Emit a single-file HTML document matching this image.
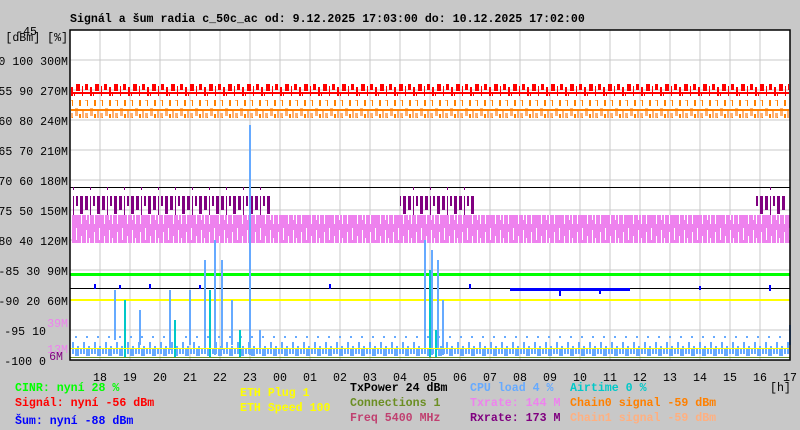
<!DOCTYPE html>
<html><head><meta charset="utf-8"><style>
html,body{margin:0;padding:0;background:#c8c8c8;}
svg{display:block;}
text{font-family:"Liberation Mono","DejaVu Sans Mono",monospace;font-size:11.6px;}
</style></head><body>
<svg width="800" height="430" viewBox="0 0 800 430" xmlns="http://www.w3.org/2000/svg">
<defs>
<pattern id="pk" width="23" height="28" patternUnits="userSpaceOnUse">
<rect width="23" height="28" fill="#ee82ee"/><rect x="2" y="8" width="1" height="20" fill="#fff"/><rect x="7" y="4" width="1" height="12" fill="#fff"/><rect x="12" y="12" width="1" height="16" fill="#fff"/><rect x="17" y="6" width="1" height="18" fill="#fff"/><rect x="20" y="14" width="1" height="14" fill="#fff"/>
</pattern>
<pattern id="pu" width="17" height="28" patternUnits="userSpaceOnUse">
<rect x="0" y="0" width="3" height="14" fill="#800080"/><rect x="5" y="0" width="1" height="22" fill="#800080"/><rect x="8" y="0" width="2" height="10" fill="#800080"/><rect x="12" y="0" width="3" height="18" fill="#800080"/>
</pattern>
<pattern id="rd" width="19" height="14" patternUnits="userSpaceOnUse">
<rect x="0" y="0" width="4" height="7" fill="#f00"/><rect x="6" y="2" width="1" height="10" fill="#f00"/><rect x="9" y="0" width="3" height="6" fill="#f00"/><rect x="14" y="3" width="2" height="9" fill="#f00"/><rect x="17" y="8" width="1" height="4" fill="#f00"/>
</pattern>
<pattern id="or" width="15" height="18" patternUnits="userSpaceOnUse">
<rect x="0" y="0" width="3" height="8" fill="#ffb070"/><rect x="4" y="6" width="2" height="10" fill="#ff8000"/><rect x="7" y="2" width="2" height="8" fill="#ffb070"/><rect x="10" y="5" width="3" height="6" fill="#ffb070"/><rect x="12" y="9" width="1" height="7" fill="#ff8000"/>
</pattern>
<pattern id="cp" width="11" height="20" patternUnits="userSpaceOnUse">
<rect x="0" y="6" width="2" height="10" fill="#66aaff"/><rect x="3" y="8" width="2" height="6" fill="#66aaff"/><rect x="6" y="2" width="2" height="12" fill="#66aaff"/><rect x="9" y="8" width="2" height="10" fill="#66aaff"/>
</pattern>
</defs>
<rect x="70" y="30" width="720" height="330" fill="#fff"/>
<g stroke="#c8c8c8" stroke-width="1">
<path d="M100 30V360M130 30V360M160 30V360M190 30V360M220 30V360M250 30V360M280 30V360M310 30V360M340 30V360M370 30V360M400 30V360M430 30V360M460 30V360M490 30V360M520 30V360M550 30V360M580 30V360M610 30V360M640 30V360M670 30V360M700 30V360M730 30V360M760 30V360"/>
<path d="M70 60H790M70 90H790M70 120H790M70 150H790M70 180H790M70 210H790M70 240H790M70 270H790M70 300H790M70 330H790"/>
</g>
<rect x="71" y="83" width="718" height="14" fill="url(#rd)"/>
<rect x="71" y="92" width="718" height="2" fill="#f00"/>
<rect x="71" y="100" width="718" height="18" fill="url(#or)"/>
<rect x="71" y="109" width="718" height="2" fill="#ff8000"/>
<rect x="70" y="187" width="720" height="1" fill="#000"/>
<rect x="72" y="187" width="200" height="28" fill="url(#pu)"/>
<rect x="400" y="187" width="75" height="28" fill="url(#pu)"/>
<rect x="755" y="187" width="30" height="28" fill="url(#pu)"/>
<rect x="72" y="215" width="718" height="28" fill="url(#pk)"/>
<rect x="70" y="273" width="720" height="3" fill="#00ff00"/>
<rect x="70" y="288" width="720" height="1" fill="#000"/>
<path d="M95 284v5M120 285v4M150 284v5M200 285v4M330 284v5M470 284v5M560 288v8M600 288v6M700 286v4M770 285v6" stroke="#0000ff" stroke-width="2"/>
<rect x="510" y="288" width="120" height="3" fill="#0000ff"/>
<rect x="70" y="299" width="720" height="2" fill="#ffff00"/>
<rect x="71" y="336" width="718" height="20" fill="url(#cp)"/>
<path d="M115 340V290M140 345V310M170 350V290M190 345V290M205 350V260M215 355V240M222 350V260M232 345V300M250 355V125M260 345V330M425 350V240M432 355V250M438 350V260M443 355V300M790 345V325" stroke="#66aaff" stroke-width="2"/>
<path d="M125 358V300M175 358V320M210 358V290M240 358V330M430 358V270M436 358V330" stroke="#00c8c8" stroke-width="2"/>
<rect x="70" y="348" width="720" height="1" fill="#ffff00"/>
<rect x="70" y="357" width="720" height="1" fill="#6b8e23"/>
<rect x="70" y="30" width="720" height="330" fill="none" stroke="#000" stroke-width="1.5"/>
<text x="70" y="22" font-weight="bold">Signál a šum radia c_50c_ac od: 9.12.2025 17:03:00 do: 10.12.2025 17:02:00</text>
<g text-anchor="end" fill="#000">
<text x="37" y="35">-45</text>
<text x="68" y="41">[dBm] [%]</text>
<text x="68" y="65">-50 100 300M</text>
<text x="68" y="95">-55 90 270M</text>
<text x="68" y="125">-60 80 240M</text>
<text x="68" y="155">-65 70 210M</text>
<text x="68" y="185">-70 60 180M</text>
<text x="68" y="215">-75 50 150M</text>
<text x="68" y="245">-80 40 120M</text>
<text x="68" y="275">-85 30 90M</text>
<text x="68" y="305">-90 20 60M</text>
<text x="68" y="327" fill="#ee82ee">39M</text>
<text x="46" y="335">-95 10</text>
<text x="68" y="353" fill="#ee82ee">13M</text>
<text x="63" y="360" fill="#800080">6M</text>
<text x="46" y="365">-100 0</text>
</g>
<g text-anchor="middle">
<text x="100" y="381">18</text><text x="130" y="381">19</text><text x="160" y="381">20</text><text x="190" y="381">21</text><text x="220" y="381">22</text><text x="250" y="381">23</text><text x="280" y="381">00</text><text x="310" y="381">01</text><text x="340" y="381">02</text><text x="370" y="381">03</text><text x="400" y="381">04</text><text x="430" y="381">05</text><text x="460" y="381">06</text><text x="490" y="381">07</text><text x="520" y="381">08</text><text x="550" y="381">09</text><text x="580" y="381">10</text><text x="610" y="381">11</text><text x="640" y="381">12</text><text x="670" y="381">13</text><text x="700" y="381">14</text><text x="730" y="381">15</text><text x="760" y="381">16</text><text x="790" y="381">17</text>
</g>
<text x="770" y="391">[h]</text>
<g font-weight="bold">
<text x="15" y="391" fill="#00ff00">CINR: nyní 28 %</text>
<text x="15" y="406" fill="#ff0000">Signál: nyní -56 dBm</text>
<text x="15" y="424" fill="#0000ff">Šum: nyní -88 dBm</text>
<text x="240" y="396" fill="#ffff00">ETH Plug 1</text>
<text x="240" y="411" fill="#ffff00">ETH Speed 100</text>
<text x="350" y="391" fill="#000">TxPower 24 dBm</text>
<text x="350" y="406" fill="#6b8e23">Connections 1</text>
<text x="350" y="421" fill="#c04070">Freq 5400 MHz</text>
<text x="470" y="391" fill="#66aaff">CPU load 4 %</text>
<text x="470" y="406" fill="#ee82ee">Txrate: 144 M</text>
<text x="470" y="421" fill="#800080">Rxrate: 173 M</text>
<text x="570" y="391" fill="#00c8c8">Airtime 0 %</text>
<text x="570" y="406" fill="#ff8000">Chain0 signal -59 dBm</text>
<text x="570" y="421" fill="#ffb080">Chain1 signal -59 dBm</text>
</g>
</svg>
</body></html>
